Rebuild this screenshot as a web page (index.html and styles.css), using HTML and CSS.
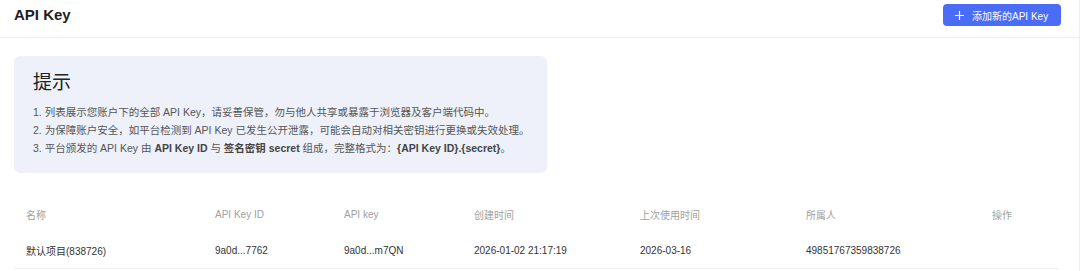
FILE: index.html
```html
<!DOCTYPE html>
<html lang="zh-CN">
<head>
    <meta charset="UTF-8">
    <meta name="viewport" content="width=device-width, initial-scale=1.0">
    <title>API Key</title>
    <link rel="stylesheet" href="styles.css">
</head>
<body>
    <div class="page">
        <div class="header">
            <h1 class="title">API Key</h1>
            <button class="btn-add">
                <svg class="plus" width="9" height="9" viewBox="0 0 9 9">
                    <path d="M4.5 0v9M0 4.5h9" stroke="#fff" stroke-width="1.2" fill="none"/>
                </svg>
                添加新的API Key
            </button>
        </div>

        <div class="tip-box">
            <h3 class="tip-title">提示</h3>
            <p>1. 列表展示您账户下的全部 API Key，请妥善保管，勿与他人共享或暴露于浏览器及客户端代码中。</p>
            <p>2. 为保障账户安全，如平台检测到 API Key 已发生公开泄露，可能会自动对相关密钥进行更换或失效处理。</p>
            <p>3. 平台颁发的 API Key 由 <b>API Key ID</b> 与 <b>签名密钥 secret</b> 组成，完整格式为：<b>{API Key ID}.{secret}</b>。</p>
        </div>

        <div class="table">
            <div class="row head">
                <div>名称</div>
                <div>API Key ID</div>
                <div>API key</div>
                <div>创建时间</div>
                <div>上次使用时间</div>
                <div>所属人</div>
                <div>操作</div>
            </div>
            <div class="row">
                <div>默认项目(838726)</div>
                <div>9a0d...7762</div>
                <div>9a0d...m7QN</div>
                <div>2026-01-02 21:17:19</div>
                <div>2026-03-16</div>
                <div>49851767359838726</div>
                <div></div>
            </div>
        </div>
    </div>
</body>
</html>
```

FILE: styles.css
```css
body {
    margin: 0;
    font-family: "Liberation Sans", Arial, "Noto Sans CJK SC", sans-serif;
    background: #fff;
    color: #333;
}

.page {
    height: 271px;
    border-right: 1px solid #eeeeee;
    overflow: hidden;
}

.header {
    display: flex;
    justify-content: space-between;
    align-items: flex-start;
    height: 33px;
    padding: 4px 18px 0 14px;
    border-bottom: 1px solid #f0f0f0;
}

.title {
    margin: 0;
    font-size: 15px;
    line-height: 22px;
    font-weight: bold;
    color: #1d1d1f;
}

.btn-add {
    display: flex;
    align-items: center;
    gap: 8px;
    height: 22px;
    width: 118px;
    padding: 0 0 0 12px;
    border: none;
    border-radius: 4px;
    background-color: #4a6cf7;
    color: #fff;
    font-family: inherit;
    font-size: 10px;
    cursor: pointer;
}

.tip-box {
    width: 495px;
    margin: 18px 0 0 14px;
    padding: 14px 19px 16px 19px;
    background-color: #eef1f9;
    border-radius: 6px;
    color: #555;
    font-size: 10.5px;
}

.tip-title {
    margin: 0 0 7px 0;
    font-size: 19px;
    line-height: 26px;
    font-weight: normal;
    color: #222;
}

.tip-box p {
    margin: 0;
    line-height: 18px;
    white-space: nowrap;
}

.tip-box b {
    color: #444;
}

.table {
    margin: 24px 20px 0 14px;
    font-size: 10px;
}

.row {
    display: grid;
    grid-template-columns: 189px 129px 130px 166px 166px 186px 1fr;
    align-items: center;
    height: 35px;
}

.row div {
    padding-left: 12px;
}

.row.head {
    color: #a0a0a0;
}

.row:not(.head) {
    height: 36px;
    border-bottom: 1px solid #f0f0f0;
    color: #333;
}
```
